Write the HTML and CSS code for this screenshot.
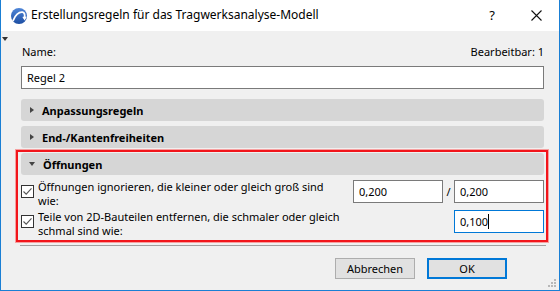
FILE: index.html
```html
<!DOCTYPE html>
<html lang="de">
<head>
<meta charset="utf-8">
<title>Erstellungsregeln</title>
<link rel="stylesheet" href="styles.css">
</head>
<body>
<div class="window">
  <div class="titlebar">
    <svg class="logo" width="18" height="18" viewBox="0 0 18 18">
      <defs>
        <linearGradient id="lg" x1="0" y1="0" x2="0" y2="1">
          <stop offset="0" stop-color="#4f86d8"/>
          <stop offset="1" stop-color="#1d4ea3"/>
        </linearGradient>
      </defs>
      <circle cx="9" cy="9" r="8" fill="url(#lg)"/>
      <path d="M3.2 13.5 C5 8 9 4.6 12.6 5.2 C14.6 5.6 15 8 14.6 11" fill="none" stroke="#fff" stroke-width="1.8" stroke-linecap="round"/>
      <path d="M13.2 10.2 L14.6 12.2 L15.9 10" fill="none" stroke="#fff" stroke-width="1.3" stroke-linecap="round"/>
    </svg>
    <span class="title">Erstellungsregeln für das Tragwerksanalyse-Modell</span>
    <span class="help">?</span>
    <svg class="close" width="11" height="11" viewBox="0 0 11 11">
      <path d="M0.5 0.5 L10.5 10.5 M10.5 0.5 L0.5 10.5" stroke="#111" stroke-width="1.1"/>
    </svg>
  </div>
  <div class="content">
    <span class="corner-mark"></span>
    <div class="name-row">
      <span>Name:</span>
      <span>Bearbeitbar: 1</span>
    </div>
    <div class="field name-field">Regel 2</div>
    <div class="section">
      <span class="tri tri-right"></span>
      <span class="section-title">Anpassungsregeln</span>
    </div>
    <div class="section section-gap">
      <span class="tri tri-right"></span>
      <span class="section-title">End-/Kantenfreiheiten</span>
    </div>
    <div class="highlight">
      <div class="section">
        <span class="tri tri-down"></span>
        <span class="section-title">Öffnungen</span>
      </div>
      <div class="opt-row row1">
        <span class="check">
          <svg width="13" height="13" viewBox="0 0 13 13"><rect x="0.5" y="0.5" width="12" height="12" fill="#fff" stroke="#333"/><path d="M2.5 6.5 L5.2 9.2 L10.5 3.4" fill="none" stroke="#555" stroke-width="1.1"/></svg>
        </span>
        <span class="opt-text">Öffnungen ignorieren, die kleiner oder gleich groß sind wie:</span>
        <div class="values">
          <div class="field val">0,200</div>
          <span class="slash">/</span>
          <div class="field val">0,200</div>
        </div>
      </div>
      <div class="opt-row row2">
        <span class="check">
          <svg width="13" height="13" viewBox="0 0 13 13"><rect x="0.5" y="0.5" width="12" height="12" fill="#fff" stroke="#333"/><path d="M2.5 6.5 L5.2 9.2 L10.5 3.4" fill="none" stroke="#555" stroke-width="1.1"/></svg>
        </span>
        <span class="opt-text">Teile von 2D-Bauteilen entfernen, die schmaler oder gleich schmal sind wie:</span>
        <div class="values">
          <div class="field val focus"><span class="caret">0,100</span></div>
        </div>
      </div>
    </div>
    <div class="separator"></div>
    <div class="buttons">
      <div class="btn">Abbrechen</div>
      <div class="btn btn-default">OK</div>
    </div>
    <svg class="grip" width="9" height="9" viewBox="0 0 9 9">
      <rect x="6" y="0" width="2" height="2" fill="#b8b8b8"/>
      <rect x="3" y="3" width="2" height="2" fill="#b8b8b8"/>
      <rect x="6" y="3" width="2" height="2" fill="#b8b8b8"/>
      <rect x="0" y="6" width="2" height="2" fill="#b8b8b8"/>
      <rect x="3" y="6" width="2" height="2" fill="#b8b8b8"/>
      <rect x="6" y="6" width="2" height="2" fill="#b8b8b8"/>
    </svg>
  </div>
</div>
</body>
</html>
```

FILE: styles.css
```css
* { box-sizing: border-box; }
html, body { margin: 0; padding: 0; }
body {
  width: 560px;
  height: 291px;
  overflow: hidden;
  font-family: "Noto Sans", "Open Sans", sans-serif;
  font-size: 11px;
  color: #000;
  background: #fff;
}
.window {
  width: 560px;
  height: 291px;
  border: 1px solid #1a7fd4;
  border-top: none;
  display: flex;
  flex-direction: column;
}
.titlebar {
  height: 31px;
  background: #fff;
  display: flex;
  align-items: center;
  flex: none;
}
.logo { margin-left: 9px; margin-right: 3px; }
.title {
  font-size: 12px;
  color: #000;
  flex: 1;
  margin-top: -2px;
}
.help { font-size: 13px; margin-right: 36px; margin-top: -2px; }
.close { margin-right: 17px; margin-top: -1px; }

.content {
  position: relative;
  flex: 1;
  background: #f0f0f0;
  padding: 13px 15px 0 20px;
  display: flex;
  flex-direction: column;
}
.corner-mark {
  position: absolute;
  left: 1px;
  top: 6px;
  width: 0; height: 0;
  border-left: 3px solid transparent;
  border-right: 3px solid transparent;
  border-top: 4px solid #333;
}
.name-row {
  height: 16px;
  display: flex;
  justify-content: space-between;
  line-height: 16px;
  padding-left: 1px;
}
.field {
  height: 23px;
  background: #fff;
  border: 1px solid #7a7a7a;
  line-height: 21px;
  padding-left: 5px;
}
.name-field { margin-top: 6px; }
.section {
  height: 22px;
  margin-top: 10px;
  background: #d6d6d6;
  border-radius: 3px;
  display: flex;
  align-items: center;
  padding-left: 9px;
}
.section-gap { margin-top: 5px; }
.section-title { font-weight: bold; margin-left: 8px; }
.tri { width: 0; height: 0; display: inline-block; }
.tri-right {
  border-top: 3.5px solid transparent;
  border-bottom: 3.5px solid transparent;
  border-left: 4px solid #444;
}
.tri-down {
  border-left: 3.5px solid transparent;
  border-right: 3.5px solid transparent;
  border-top: 4px solid #444;
  margin-left: -1px;
}
.highlight {
  margin: 2px -4px 0 -5px;
  height: 92px;
  border: 2px solid #f2151b;
  box-shadow: 0 0 0 1px #f6a0a0;
  padding: 1px 2px 0 3px;
}
.highlight .section { margin-top: 0; }
.opt-row {
  display: flex;
  align-items: flex-start;
}
.row1 { margin-top: 5px; height: 26px; }
.row2 { margin-top: 4px; }
.check { width: 13px; height: 13px; margin-top: 5px; margin-left: 0; flex: none; }
.check svg { display: block; }
.opt-text {
  width: 306px;
  margin-left: 4px;
  line-height: 14px;
  margin-top: 0;
}
.values {
  margin-left: auto;
  display: flex;
  align-items: flex-start;
}
.val { width: 90px; height: 23px; }
.slash { width: 11px; text-align: center; line-height: 23px; }
.focus { border-color: #0078d7; }
.caret { border-right: 1px solid #000; padding-right: 0; }
.separator {
  margin: 3px -2px 0 -1px;
  height: 1px;
  background: #a0a0a0;
}
.buttons {
  display: flex;
  justify-content: flex-end;
  margin-top: 12px;
  padding-right: 37px;
}
.btn {
  width: 80px;
  height: 21px;
  background: #e1e1e1;
  border: 1px solid #adadad;
  text-align: center;
  line-height: 19px;
  margin-left: 12px;
}
.btn-default {
  border: 2px solid #0078d7;
  line-height: 17px;
}
.grip {
  position: absolute;
  right: 2px;
  bottom: 2px;
}
```
